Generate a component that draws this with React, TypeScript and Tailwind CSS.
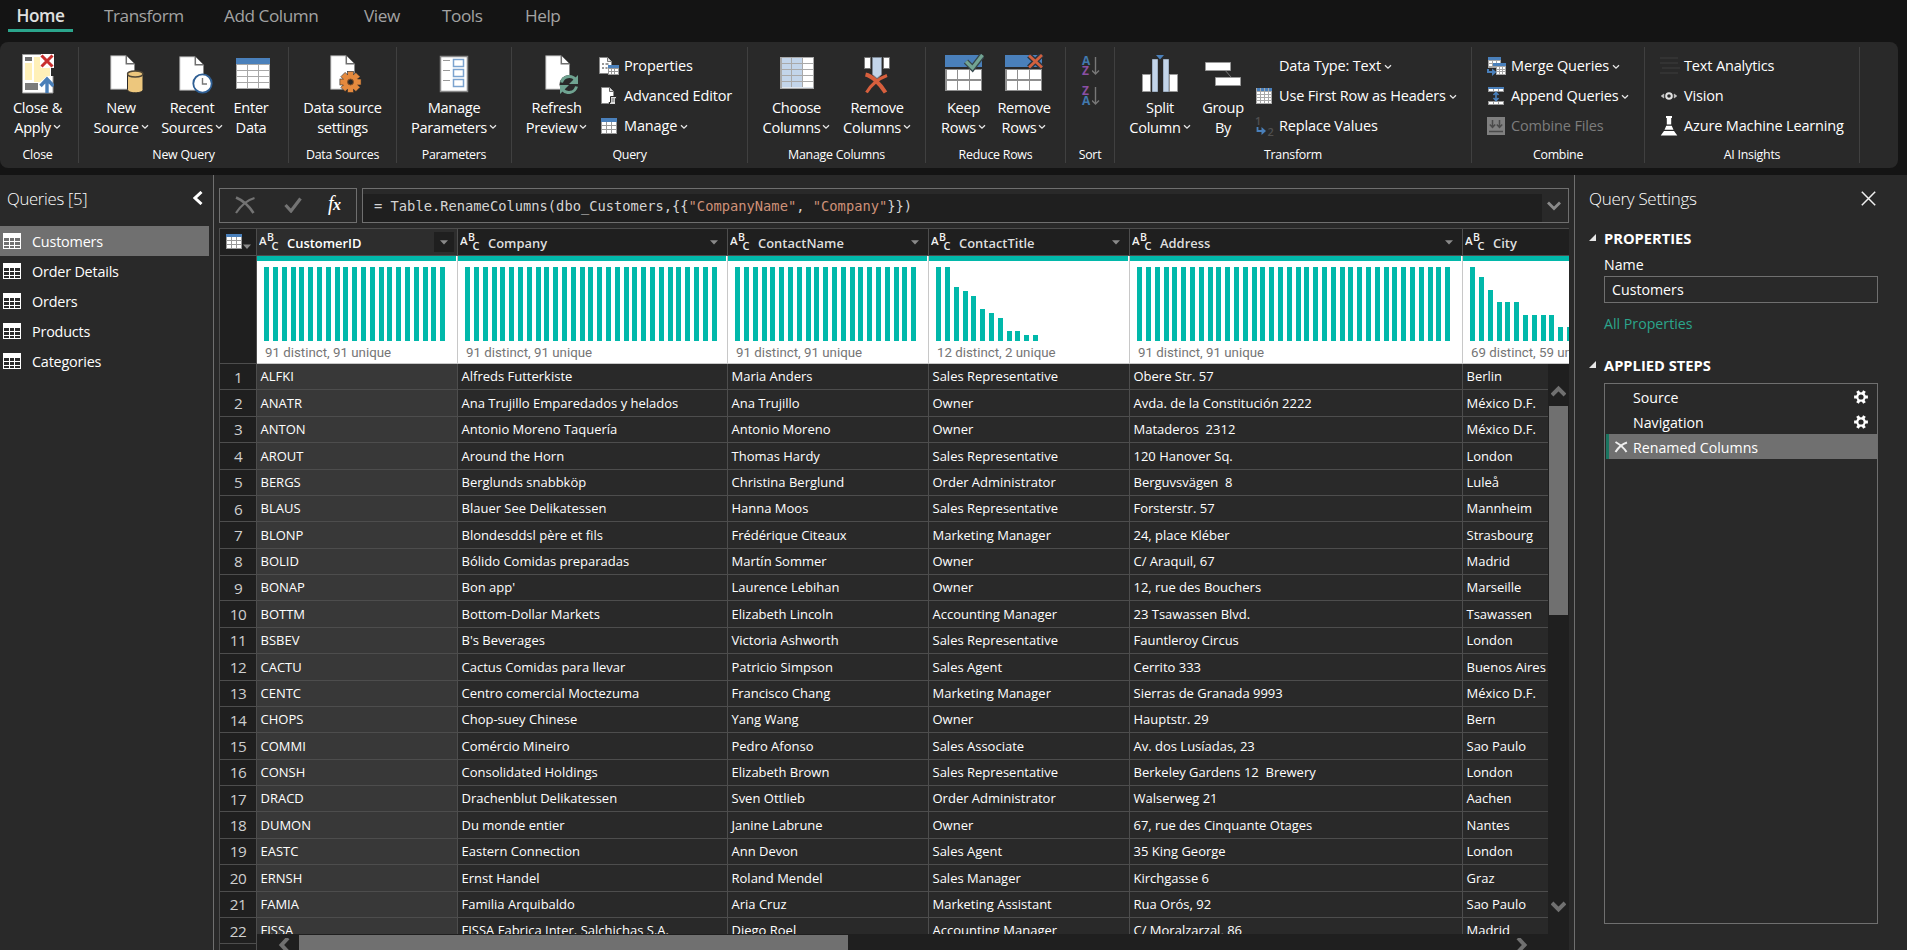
import React from "react";

/* ---------- ribbon icons ---------- */

const Chevron = ({ className = "" }: { className?: string }) => (
  <svg width="8" height="6" viewBox="0 0 8 6" className={`inline-block ${className}`}>
    <path d="M1 1.2 4 4.2 7 1.2" fill="none" stroke="#e8e8e8" strokeWidth="1.3" />
  </svg>
);

const Page = () => (
  <>
    <path d="M.7.7H16L24.5 9.2V34.3H.7z" fill="#fff" stroke="#8a8a8a" strokeWidth="1" />
    <path d="M16.3.8v8h8" fill="#fff" stroke="#6f6f6f" strokeWidth="1.5" />
  </>
);

const CloseApplyIcon = () => (
  <svg width="32" height="40" viewBox="0 0 32 40">
    <path d="M.5.5H31V39H.5z" fill="#fff" stroke="#9a9a9a" />
    <path d="M3 3h7v4H3z" fill="#6e6e6e" />
    <path d="M3 9h7v17H3zM12 3h6v9l10 2v8H25l-7 6h-6z" fill="#fff0b8" />
    <path d="M3 29h13v7H3z" fill="#7b7b7b" />
    <path d="M19 0h13v14H19z" fill="#fff" />
    <path d="M29 14h3v8h-3z" fill="#292929" />
    <path d="m19.500 1.500 11 11m0-11-11 11" stroke="#c92f2f" strokeWidth="3" />
    <path d="M25 39V26M18.500 32 25 25l6.500 7" stroke="#4a7fb8" strokeWidth="3.400" fill="none" />
  </svg>
);

const NewSourceIcon = () => (
  <svg width="34" height="40" viewBox="0 0 34 40" className="relative left-[6px]">
    <g transform="translate(0 1)">
      <Page />
    </g>
    <path d="M17.500 20v15.500c0 2 3.500 3.300 7.700 3.300s7.800-1.300 7.800-3.300V20z" fill="#edc77d" stroke="#292929" />
    <ellipse cx="25.200" cy="20" rx="7.700" ry="3" fill="#edc77d" stroke="#4f4636" strokeWidth="1.400" />
  </svg>
);

const RecentIcon = () => (
  <svg width="34" height="40" viewBox="0 0 34 40" className="relative left-[4px]">
    <g transform="translate(0 2)">
      <Page />
    </g>
    <circle cx="23.500" cy="29.500" r="9.200" fill="#fff" stroke="#2f5f94" strokeWidth="1.800" />
    <path d="M23.500 24v6H28" fill="none" stroke="#777" strokeWidth="1.400" />
  </svg>
);

const TableIcon = () => (
  <svg width="36" height="40" viewBox="0 0 36 40" shapeRendering="crispEdges" className="relative left-[2px]">
    <path d="M1 4h34v31H1z" fill="#a8a8a8" />
    <path d="M1 4h34v6H1z" fill="#4a80bb" />
    {[11, 17, 23, 29].map((y) => (
      <g key={y} fill="#fff">
        <path d={`M2 ${y}h10v5H2zM13 ${y}h10v5H13zM24 ${y}h10v5H24z`} />
      </g>
    ))}
  </svg>
);

const DataSourceIcon = () => (
  <svg width="34" height="40" viewBox="0 0 34 40" className="relative left-[4px]">
    <g transform="translate(0 1)">
      <Page />
    </g>
    <g transform="translate(20.500 28)">
      <g fill="#e58a3e" stroke="#292929" strokeWidth=".6">
        {[0, 45, 90, 135].map((a) => (
          <rect key={a} x="-3" y="-10.600" width="6" height="21.200" transform={`rotate(${a})`} />
        ))}
      </g>
      <circle r="7.600" fill="#e58a3e" />
      <circle r="3" fill="#292929" stroke="#8c5427" />
    </g>
  </svg>
);

const ManageParamsIcon = () => (
  <svg width="30" height="40" viewBox="0 0 30 40">
    <path d="M1.500 2.500h27v35h-27z" fill="#fff" stroke="#888" strokeWidth="1.500" />
    {[5.500, 15.500, 25.500].map((y) => (
      <g key={y} fill="none">
        <rect x="14.500" y={y} width="10" height="7" stroke="#7ba3cf" strokeWidth="1.500" />
        <path d={`M4 ${y + 1}h7`} stroke="#999" />
      </g>
    ))}
  </svg>
);

const RefreshIcon = () => (
  <svg width="34" height="40" viewBox="0 0 34 40" className="relative left-[5px]">
    <g transform="translate(0 1)">
      <Page />
    </g>
    <circle cx="24" cy="30.500" r="9.500" fill="#292929" />
    <path
      d="M16.500 28.500a8 8 0 0 1 14-3M31.500 32.500a8 8 0 0 1-14 3"
      fill="none"
      stroke="#6fa391"
      strokeWidth="3"
    />
    <path d="M33 21v9h-9zM15 40v-9h9z" fill="#6fa391" />
  </svg>
);

const ChooseColumnsIcon = () => (
  <svg width="36" height="40" viewBox="0 0 36 40" shapeRendering="crispEdges">
    <path d="M1 3h34v32H1z" fill="#a9a9a9" />
    {[4, 10, 16, 22, 28].map((y) => (
      <g key={y}>
        <path d={`M3 ${y}h9v5H3zM13 ${y}h10v5H13z`} fill="#c3d5ea" />
        <path d={`M24 ${y}h10v5H24z`} fill="#fff" />
      </g>
    ))}
    <path d="M3 33h31v1H3z" fill="#dfe6ee" />
  </svg>
);

const RemoveColumnsIcon = () => (
  <svg width="28" height="40" viewBox="0 0 28 40">
    <path d="M1.500 3.500h6v11h-6zM20.500 3.500h6v11h-6z" fill="#fff" stroke="#777" />
    <path d="M9.500 3.500h9v17l-4.500 4-4.500-4z" fill="#c3d5ea" stroke="#7c8794" />
    <path d="M2.500 20.500C9 22 17 29.500 22.500 38.500" fill="none" stroke="#d75f3d" strokeWidth="4" />
    <path d="M3.500 38.500C8 31 14.500 25 24 21.500" fill="none" stroke="#d75f3d" strokeWidth="3" />
  </svg>
);

const RowsBase = () => (
  <g shapeRendering="crispEdges">
    <path d="M1 1h37v12H1z" fill="#4a80bb" />
    <path d="M1 15h37v22H1z" fill="#8f8f8f" />
    <path d="M3 16h10v9H3zM14 16h11v9H14zM26 16h11v9H26zM3 27h10v9H3zM14 27h11v9H14zM26 27h11v9H26z" fill="#fff" />
  </g>
);

const KeepRowsIcon = () => (
  <svg width="40" height="40" viewBox="0 0 40 40">
    <RowsBase />
    <path d="m22 7.500 6.500 6.500L38.500 1" fill="none" stroke="#35454a" strokeWidth="6" />
    <path d="m22 7.500 6.500 6.500L38.500 1" fill="none" stroke="#72a392" strokeWidth="3.400" />
  </svg>
);

const RemoveRowsIcon = () => (
  <svg width="40" height="40" viewBox="0 0 40 40">
    <RowsBase />
    <path d="m25 1.500 13 12m0-13-13 13" stroke="#2b3540" strokeWidth="5.500" />
    <path d="m25 1.500 13 12m0-12.500-13 12.500" stroke="#d2603e" strokeWidth="2.800" />
  </svg>
);

const SplitIcon = () => (
  <svg width="38" height="40" viewBox="0 0 38 40">
    <path d="M15 1h8l-4 4.500z" fill="#4a80bb" />
    <path d="M1.500 20.500h8v17h-8zM28.500 20.500h8v17h-8z" fill="#fff" stroke="#999" />
    <path d="M11.500 5.500h5v32h-5zM22.500 5.500h5v32h-5z" fill="#c3d5ea" stroke="#9fb0c4" />
  </svg>
);

const GroupIcon = () => (
  <svg width="38" height="40" viewBox="0 0 38 40">
    <path d="m20 15 7 8" stroke="#777" />
    <path d="M1.500 8.500h25v8h-25zM11.500 23.500h25v8h-25z" fill="#fff" stroke="#999" />
  </svg>
);

const SortLetter = ({ letter }: { letter: string }) => (
  <span className={letter === "A" ? "text-[#4178ad]" : "text-[#8a4fa3]"}>{letter}</span>
);

const SortIcon = ({ top, bottom }: { top: string; bottom: string }) => (
  <div className="flex h-5 w-[18px]">
    <div className="flex w-[10px] flex-col text-[12px] font-bold leading-[10px]">
      <SortLetter letter={top} />
      <SortLetter letter={bottom} />
    </div>
    <svg width="8" height="20" viewBox="0 0 8 20">
      <path d="M3.500 1v17M0 14.500l3.500 3.500L7 14.500" fill="none" stroke="#777" strokeWidth="1.400" />
    </svg>
  </div>
);

/* ---------- small ribbon icons ---------- */

const MiniTable = () => (
  <svg width="18" height="18" viewBox="0 0 18 18" shapeRendering="crispEdges">
    <path d="M1 1h16v16H1z" fill="#9a9a9a" />
    <path d="M1 1h16v4H1z" fill="#4a80bb" />
    {[5, 9, 13].map((y) => (
      <path key={y} d={`M2 ${y}h4v3H2zM7 ${y}h4v3H7zM12 ${y}h4v3H12z`} fill="#fff" />
    ))}
  </svg>
);

const PropertiesIcon = () => (
  <svg width="20" height="20" viewBox="0 0 20 20" className="-ml-px">
    <path d="M.5 1.500h8l4 4v12H.5z" fill="#fff" stroke="#888" />
    <path d="M8.500 1.500v4h4" fill="#ddd" stroke="#777" />
    <path d="M3 8h2M6.500 8h3M3 12h2M6.500 12h2" stroke="#777" strokeWidth="1.500" />
    <path d="M9 10h11v9H9z" fill="#999" />
    <path d="M9 9h11v3H9z" fill="#4a80bb" />
    <path d="M10 13h2v2h-2zM13 13h2v2h-2zM16 13h3v2h-3zM10 16h2v2h-2zM13 16h2v2h-2zM16 16h3v2h-3z" fill="#fff" />
  </svg>
);

const AdvancedIcon = () => (
  <svg width="18" height="20" viewBox="0 0 18 20">
    <path d="M1.500 1.500h8l4 4v12h-12z" fill="#fff" stroke="#888" />
    <path d="M9.500 1.500v4h4" fill="#ddd" stroke="#666" />
    <path d="M10.500 10.500h6v2h-1v6h-5.500l-1-2h1.500z" fill="#ddd" stroke="#292929" />
    <path d="M11.500 13h3M11.500 15h3" stroke="#666" />
  </svg>
);

const HeaderTableIcon = () => (
  <svg width="18" height="18" viewBox="0 0 18 18" shapeRendering="crispEdges">
    <path d="M1 1h16v16H1z" fill="#a9a9a9" />
    <path d="M2 1h3v3H2zM6 1h3v3H6zM10 1h3v3h-3zM14 1h3v3h-3z" fill="#4a80bb" />
    {[5, 8, 11, 14].map((y) => (
      <path key={y} d={`M2 ${y}h3v2H2zM6 ${y}h3v2H6zM10 ${y}h3v2h-3zM14 ${y}h2v2h-2z`} fill="#fff" />
    ))}
  </svg>
);

const ReplaceIcon = () => (
  <svg width="20" height="20" viewBox="0 0 20 20" fontFamily="Open Sans" fontSize="11" fontWeight="600">
    <text x="0" y="9" fill="#505050">1</text>
    <text x="12.500" y="19.500" fill="#505050">2</text>
    <path d="M2.500 11v4H8" fill="none" stroke="#4a80bb" strokeWidth="1.800" />
    <path d="m6.500 11 4.500 4-4.500 4z" fill="#4a80bb" />
  </svg>
);

const MergeIcon = () => (
  <svg width="20" height="20" viewBox="0 0 20 20" shapeRendering="crispEdges">
    <path d="M1 1h13v11H1z" fill="#a5a5a5" />
    <path d="M1 1h13v3H1z" fill="#4a80bb" />
    <path d="M2 5h3v2H2zM6 5h3v2H6zM10 5h3v2h-3zM2 8h3v2H2z" fill="#fff" />
    <path d="M6 7h13v12H6z" fill="#a5a5a5" />
    <path d="M6 7h13v3H6z" fill="#4a80bb" />
    <path d="M10 11h2v2h-2zM13 11h2v2h-2zM16 11h2v2h-2zM10 14h2v1h-2zM13 14h2v1h-2zM16 14h2v1h-2zM10 16h2v2h-2zM13 16h2v2h-2zM16 16h2v2h-2z" fill="#fff" />
    <path d="M0 12h9v8H0z" fill="#292929" />
    <path d="M1 13v3h5" fill="none" stroke="#4a80bb" strokeWidth="2" shapeRendering="auto" />
    <path d="m5 12.500 4.500 3.500L5 20z" fill="#4a80bb" shapeRendering="auto" />
  </svg>
);

const AppendIcon = () => (
  <svg width="18" height="20" viewBox="0 0 18 20">
    <g shapeRendering="crispEdges">
      <path d="M1 1h16v2H1z" fill="#4a80bb" />
      <path d="M1 3h16v3H1zM1 15h16v4H1z" fill="#999" />
      <path d="M2 3h4v2H2zM7 3h4v2H7zM12 3h4v2H12zM2 16h4v2H2zM7 16h4v2H7zM12 16h4v2H12z" fill="#fff" />
    </g>
    <path d="M9 7v7M6.500 9 9 6.500 11.500 9M6.500 12 9 14.500 11.500 12" fill="none" stroke="#4a80bb" strokeWidth="1.600" />
  </svg>
);

const CombineIcon = () => (
  <svg width="18" height="20" viewBox="0 0 18 20">
    <path d="M0 1h18v18H0z" fill="#808080" />
    <path d="M5.500 4v7M2.800 8.500 5.500 11.500 8.200 8.500M12.500 4v7M9.800 8.500l2.700 3 2.700-3M2 15.500h14" fill="none" stroke="#4a4a4a" strokeWidth="1.500" />
  </svg>
);

const TextAnalyticsIcon = () => (
  <svg width="20" height="18" viewBox="0 0 20 18" shapeRendering="crispEdges">
    <path d="M0 0h18v2H0zM0 5h18v2H0zM2 10h18v2H2zM0 15h18v2H0z" fill="#333" />
  </svg>
);

const VisionIcon = () => (
  <svg width="18" height="12" viewBox="0 0 18 12">
    <circle cx="9" cy="6" r="2.800" fill="none" stroke="#e2e2e2" strokeWidth="2" />
    <path d="M3.800 4 1.200 6l2.600 2zM14.200 4l2.600 2-2.600 2z" fill="#d0d0d0" stroke="#d0d0d0" strokeWidth=".6" />
  </svg>
);

const FlaskIcon = () => (
  <svg width="18" height="20" viewBox="0 0 18 20">
    <path d="M6 0h6v2h-.8v6.500h-4.400V2H6zM6.300 9.800h5.400l1.800 4H4.500zM4 15h10l3.300 4.500H.7z" fill="#fff" />
  </svg>
);

/* ---------- ribbon building blocks ---------- */

const Group = ({ label, className, children }: { label: string; className: string; children: React.ReactNode }) => (
  <div className={`flex shrink-0 flex-col border-r border-[#404040] ${className}`}>
    <div className="flex h-[100px] w-full">{children}</div>
    <div className="text-center text-[12.4px] leading-4 tracking-[-0.25px]">{label}</div>
  </div>
);

const Big = ({
  icon,
  a,
  b,
  menu,
  className,
}: {
  icon: React.ReactNode;
  a: string;
  b: string;
  menu?: boolean;
  className: string;
}) => (
  <button className={`flex shrink-0 flex-col items-center pt-[7px] text-[14.6px] leading-5 tracking-[-0.3px] ${className}`}>
    <span className="mb-[3px] block h-10">{icon}</span>
    <span className="whitespace-nowrap">{a}</span>
    <span className="flex items-center whitespace-nowrap">
      {b}
      {menu && <Chevron className="ml-[2px]" />}
    </span>
  </button>
);

const Small = ({ icon, text, menu, muted }: { icon: React.ReactNode; text: string; menu?: boolean; muted?: boolean }) => (
  <div className="flex h-[30px] items-center">
    <span className="flex w-6 shrink-0">{icon}</span>
    <span className={`whitespace-nowrap text-[14.5px] tracking-[-0.15px] ${muted ? "text-[#7d7d7d]" : ""}`}>{text}</span>
    {menu && <Chevron className="ml-[3px] mt-0.5" />}
  </div>
);

const Ribbon = () => (
  <div className="mr-[9px] flex h-[126px] rounded-lg bg-[#292929] py-[5px] text-white">
    <Group label="Close" className="w-[79px] pr-[3px]">
      <Big icon={<CloseApplyIcon />} a="Close &" b="Apply" menu className="w-[75px]" />
    </Group>
    <Group label="New Query" className="w-[210px]">
      <Big icon={<NewSourceIcon />} a="New" b="Source" menu className="w-[84px]" />
      <Big icon={<RecentIcon />} a="Recent" b="Sources" menu className="w-[58px]" />
      <Big icon={<TableIcon />} a="Enter" b="Data" className="w-[60px]" />
    </Group>
    <Group label="Data Sources" className="w-[108px]">
      <Big icon={<DataSourceIcon />} a="Data source" b="settings" className="w-[107px]" />
    </Group>
    <Group label="Parameters" className="w-[115px]">
      <Big icon={<ManageParamsIcon />} a="Manage" b="Parameters" menu className="w-[114px]" />
    </Group>
    <Group label="Query" className="w-[236px]">
      <Big icon={<RefreshIcon />} a="Refresh" b="Preview" menu className="w-[89px]" />
      <div className="-ml-px pt-1">
        <Small icon={<PropertiesIcon />} text="Properties" />
        <Small icon={<AdvancedIcon />} text="Advanced Editor" />
        <Small icon={<MiniTable />} text="Manage" menu />
      </div>
    </Group>
    <Group label="Manage Columns" className="w-[178px]">
      <Big icon={<ChooseColumnsIcon />} a="Choose" b="Columns" menu className="ml-2 w-[81px]" />
      <Big icon={<RemoveColumnsIcon />} a="Remove" b="Columns" menu className="w-20" />
    </Group>
    <Group label="Reduce Rows" className="w-[140px]">
      <Big icon={<KeepRowsIcon />} a="Keep" b="Rows" menu className="ml-[7px] w-[61px]" />
      <Big icon={<RemoveRowsIcon />} a="Remove" b="Rows" menu className="w-[60px]" />
    </Group>
    <Group label="Sort" className="w-[49px]">
      <div className="flex flex-col gap-[10px] pl-4 pt-[9px]">
        <SortIcon top="A" bottom="Z" />
        <SortIcon top="Z" bottom="A" />
      </div>
    </Group>
    <Group label="Transform" className="w-[357px]">
      <Big icon={<SplitIcon />} a="Split" b="Column" menu className="ml-[5px] w-20" />
      <Big icon={<GroupIcon />} a="Group" b="By" className="w-[46px]" />
      <div className="ml-[9px] pt-1">
        <Small icon={null} text="Data Type: Text" menu />
        <Small icon={<HeaderTableIcon />} text="Use First Row as Headers" menu />
        <Small icon={<ReplaceIcon />} text="Replace Values" />
      </div>
    </Group>
    <Group label="Combine" className="w-[173px]">
      <div className="pl-[15px] pt-1">
        <Small icon={<MergeIcon />} text="Merge Queries" menu />
        <Small icon={<AppendIcon />} text="Append Queries" menu />
        <Small icon={<CombineIcon />} text="Combine Files" muted />
      </div>
    </Group>
    <Group label="AI Insights" className="w-[215px]">
      <div className="pl-[15px] pt-1">
        <Small icon={<TextAnalyticsIcon />} text="Text Analytics" />
        <Small icon={<VisionIcon />} text="Vision" />
        <Small icon={<FlaskIcon />} text="Azure Machine Learning" />
      </div>
    </Group>
  </div>
);

const Tabs = () => (
  <nav className="flex h-[42px] pl-2 pt-[3px] text-[17.2px] leading-[25px] tracking-[-0.45px] text-[#a3a3a3]">
    <div className="h-[29px] w-[65px] border-b-[3px] border-[#2ba58c] text-center font-semibold text-[#e0e0e0]">Home</div>
    <div className="ml-[31px] w-[120px]">Transform</div>
    <div className="w-[140px]">Add Column</div>
    <div className="w-[78px]">View</div>
    <div className="w-[83px]">Tools</div>
    <div>Help</div>
  </nav>
);

/* ---------- queries pane ---------- */

const QueryIcon = ({ selected }: { selected: boolean }) => (
  <svg width="18" height="16" viewBox="0 0 18 16" shapeRendering="crispEdges">
    <path d="M0 0h18v16H0z" fill="#fff" />
    {[5, 9, 13].map((y) => (
      <path
        key={y}
        d={`M1 ${y}h5v${y === 13 ? 2 : 3}H1zM7 ${y}h4v${y === 13 ? 2 : 3}H7zM12 ${y}h5v${y === 13 ? 2 : 3}H12z`}
        fill={selected ? "#707070" : "#292929"}
      />
    ))}
  </svg>
);

const Queries = () => (
  <aside className="w-[214px] shrink-0 border-r border-[#6f6f6f] text-white">
    <div className="flex h-[51px] justify-between pl-[7px] pr-[10px] pt-[12px]">
      <h2 className="text-[16.7px] font-light leading-6 tracking-[-0.3px]">Queries [5]</h2>
      <svg width="10" height="14" viewBox="0 0 10 14" className="mt-1">
        <path d="M8.500 1 2 7l6.500 6" fill="none" stroke="#fff" strokeWidth="3" />
      </svg>
    </div>
    {["Customers", "Order Details", "Orders", "Products", "Categories"].map((q, i) => (
      <div
        key={q}
        className={`flex h-[30px] w-[209px] items-center pl-[3px] text-[14.4px] tracking-[-0.2px] ${i === 0 ? "bg-[#707070]" : ""}`}
      >
        <QueryIcon selected={i === 0} />
        <span className="ml-[11px] mt-0.5">{q}</span>
      </div>
    ))}
  </aside>
);

/* ---------- data grid ---------- */

const flat = (n: number) => Array.from({ length: n }, () => 74);

type Column = { name: string; width: string; bars: number[]; note: string; menu: boolean };

const columns: Column[] = [
  { name: "CustomerID", width: "w-[201px]", bars: flat(21), note: "91 distinct, 91 unique", menu: true },
  { name: "Company", width: "w-[270px]", bars: flat(29), note: "91 distinct, 91 unique", menu: true },
  { name: "ContactName", width: "w-[201px]", bars: flat(21), note: "91 distinct, 91 unique", menu: true },
  { name: "ContactTitle", width: "w-[201px]", bars: [74, 74, 54, 50, 45, 32, 28, 23, 10, 10, 6, 6], note: "12 distinct, 2 unique", menu: true },
  { name: "Address", width: "w-[333px]", bars: flat(36), note: "91 distinct, 91 unique", menu: true },
  { name: "City", width: "w-[201px]", bars: [74, 64, 51, 39, 39, 39, 26, 26, 26, 26, 14, 14], note: "69 distinct, 59 unique", menu: false },
];

const rows: string[][] = [
  ["ALFKI", "Alfreds Futterkiste", "Maria Anders", "Sales Representative", "Obere Str. 57", "Berlin"],
  ["ANATR", "Ana Trujillo Emparedados y helados", "Ana Trujillo", "Owner", "Avda. de la Constitución 2222", "México D.F."],
  ["ANTON", "Antonio Moreno Taquería", "Antonio Moreno", "Owner", "Mataderos  2312", "México D.F."],
  ["AROUT", "Around the Horn", "Thomas Hardy", "Sales Representative", "120 Hanover Sq.", "London"],
  ["BERGS", "Berglunds snabbköp", "Christina Berglund", "Order Administrator", "Berguvsvägen  8", "Luleå"],
  ["BLAUS", "Blauer See Delikatessen", "Hanna Moos", "Sales Representative", "Forsterstr. 57", "Mannheim"],
  ["BLONP", "Blondesddsl père et fils", "Frédérique Citeaux", "Marketing Manager", "24, place Kléber", "Strasbourg"],
  ["BOLID", "Bólido Comidas preparadas", "Martín Sommer", "Owner", "C/ Araquil, 67", "Madrid"],
  ["BONAP", "Bon app'", "Laurence Lebihan", "Owner", "12, rue des Bouchers", "Marseille"],
  ["BOTTM", "Bottom-Dollar Markets", "Elizabeth Lincoln", "Accounting Manager", "23 Tsawassen Blvd.", "Tsawassen"],
  ["BSBEV", "B's Beverages", "Victoria Ashworth", "Sales Representative", "Fauntleroy Circus", "London"],
  ["CACTU", "Cactus Comidas para llevar", "Patricio Simpson", "Sales Agent", "Cerrito 333", "Buenos Aires"],
  ["CENTC", "Centro comercial Moctezuma", "Francisco Chang", "Marketing Manager", "Sierras de Granada 9993", "México D.F."],
  ["CHOPS", "Chop-suey Chinese", "Yang Wang", "Owner", "Hauptstr. 29", "Bern"],
  ["COMMI", "Comércio Mineiro", "Pedro Afonso", "Sales Associate", "Av. dos Lusíadas, 23", "Sao Paulo"],
  ["CONSH", "Consolidated Holdings", "Elizabeth Brown", "Sales Representative", "Berkeley Gardens 12  Brewery", "London"],
  ["DRACD", "Drachenblut Delikatessen", "Sven Ottlieb", "Order Administrator", "Walserweg 21", "Aachen"],
  ["DUMON", "Du monde entier", "Janine Labrune", "Owner", "67, rue des Cinquante Otages", "Nantes"],
  ["EASTC", "Eastern Connection", "Ann Devon", "Sales Agent", "35 King George", "London"],
  ["ERNSH", "Ernst Handel", "Roland Mendel", "Sales Manager", "Kirchgasse 6", "Graz"],
  ["FAMIA", "Familia Arquibaldo", "Aria Cruz", "Marketing Assistant", "Rua Orós, 92", "Sao Paulo"],
  ["FISSA", "FISSA Fabrica Inter. Salchichas S.A.", "Diego Roel", "Accounting Manager", "C/ Moralzarzal, 86", "Madrid"],
];

const TypeIcon = () => (
  <svg width="22" height="22" viewBox="0 0 22 22" fontFamily="Open Sans" fontWeight="600" fill="#f2f2f2" className="shrink-0">
    <text x="0" y="13.500" fontSize="11.500">A</text>
    <text x="8" y="10" fontSize="10.500">B</text>
    <text x="12.500" y="18.500" fontSize="11">C</text>
  </svg>
);

const Caret = () => (
  <svg width="8" height="5" viewBox="0 0 8 5">
    <path d="M0 .3h8L4 4.600z" fill="#8a8a8a" />
  </svg>
);

const HeaderCell = ({ col, selected }: { col: Column; selected: boolean }) => (
  <div
    className={`flex h-[27px] shrink-0 items-center border-b border-r border-[#4d4d4d] pl-[2px] ${col.width} ${
      selected ? "bg-[#2d2d2d] text-white" : "bg-[#1f1f1f] text-[#dedede]"
    }`}
  >
    <TypeIcon />
    <span className="ml-[6px] mt-0.5 flex-1 text-[12.950px] font-semibold leading-[18px]">{col.name}</span>
    {col.menu && (
      <span className={`mr-[3px] flex h-5 w-5 items-center justify-center ${selected ? "bg-[#1f1f1f]" : ""}`}>
        <Caret />
      </span>
    )}
  </div>
);

const Profile = ({ col }: { col: Column }) => (
  <div className={`h-[108px] shrink-0 overflow-hidden border-b border-r border-[#c8c8c8] bg-white ${col.width}`}>
    <div className="mr-px h-[5px] bg-[#01b8aa]" />
    <svg width="320" height="74" className="ml-[7px] mt-[6px]" shapeRendering="crispEdges">
      {col.bars.map((h, i) => (
        <rect key={i} x={Math.round(i * 8.8 + 0.2)} y={74 - h} width="5" height={h} fill="#01b8aa" />
      ))}
    </svg>
    <div className="ml-2 mt-[4px] whitespace-nowrap font-[Roboto] text-[13.3px] leading-4 text-[#757575]">{col.note}</div>
  </div>
);

const Grid = () => (
  <div className="flex h-[722px] border-l border-t border-[#4d4d4d]">
    <div className="w-[37px] shrink-0 border-r border-[#4d4d4d] bg-[#1f1f1f]">
      <div className="flex h-[27px] items-center border-b border-[#4d4d4d] pl-[6px]">
        <svg width="26" height="18" viewBox="0 0 26 18">
          <g shapeRendering="crispEdges">
            <path d="M0 1h16v15H0z" fill="#999" />
            <path d="M0 1h16v3H0z" fill="#4a80bb" />
            <path d="M1 4h4v3H1zM6 4h4v3H6zM11 4h4v3h-4zM1 8h4v3H1zM6 8h4v3H6zM11 8h4v3h-4zM1 12h4v3H1zM6 12h4v3H6zM11 12h4v3h-4z" fill="#fff" />
          </g>
          <path d="M17 11.500h8L21 16z" fill="#8a8a8a" />
        </svg>
      </div>
      <div className="h-[108px] border-b border-[#4d4d4d]" />
      {rows.map((r, i) => (
        <div
          key={r[0]}
          className="flex h-[26.375px] items-center justify-center border-b border-[#4d4d4d] text-[15.3px] leading-5 tracking-[-0.5px] text-[#cfcfcf]"
        >
          {i + 1}
        </div>
      ))}
    </div>
    <div className="flex min-w-0 flex-1 flex-col overflow-hidden">
      <div className="flex">
        {columns.map((c, i) => (
          <HeaderCell key={c.name} col={c} selected={i === 0} />
        ))}
      </div>
      <div className="flex">
        {columns.map((c) => (
          <Profile key={c.name} col={c} />
        ))}
      </div>
      <div className="flex h-[570px] shrink-0">
        <div className="min-w-0 flex-1 overflow-hidden">
          {rows.map((r) => (
            <div key={r[0]} className="flex h-[26.375px]">
              {r.map((cell, i) => (
                <div
                  key={i}
                  className={`flex shrink-0 items-center whitespace-pre border-b border-r border-[#4d4d4d] pb-[0.6px] pl-[3.500px] text-[13px] font-medium leading-[18px] text-white ${columns[i].width} ${
                    i === 0 ? "bg-[#383838]" : ""
                  }`}
                >
                  {cell}
                </div>
              ))}
            </div>
          ))}
        </div>
        <div className="flex w-[21px] shrink-0 flex-col items-center bg-[#1f1f1f]">
          <svg width="15" height="12" viewBox="0 0 15 12" className="mt-[21px]">
            <path d="m1 10 6.500-6.500L14 10" fill="none" stroke="#707070" strokeWidth="4" />
          </svg>
          <div className="mt-[9px] h-[209px] w-[19px] bg-[#707070]" />
          <svg width="15" height="12" viewBox="0 0 15 12" className="mt-auto mb-[21px]">
            <path d="m1 2 6.500 6.500L14 2" fill="none" stroke="#707070" strokeWidth="4" />
          </svg>
        </div>
      </div>
      <div className="flex h-4 shrink-0 bg-[#1f1f1f] pt-px">
        <svg width="12" height="15" viewBox="0 0 12 15" className="ml-[21px] mt-[3px]">
          <path d="M10 0 3.500 7l6.500 7" fill="none" stroke="#707070" strokeWidth="4" />
        </svg>
        <div className="ml-[9px] h-[15px] w-[549px] bg-[#707070]" />
        <svg width="12" height="15" viewBox="0 0 12 15" className="ml-auto mr-[41px] mt-[3px]">
          <path d="m2 0 6.500 7L2 14" fill="none" stroke="#707070" strokeWidth="4" />
        </svg>
      </div>
    </div>
  </div>
);

const FormulaBar = () => (
  <div className="mb-[5px] flex h-[35px] gap-[5px]">
    <div className="flex w-[138px] items-center border border-[#6f6f6f]">
      <svg width="20" height="18" viewBox="0 0 20 18" className="ml-[15px] -mt-px">
        <path d="M1 1.500C7 4 14 10 18.500 17" fill="none" stroke="#737373" strokeWidth="2.600" />
        <path d="M1 17C6 9.500 12 4 19.500 2" fill="none" stroke="#737373" strokeWidth="2.200" />
      </svg>
      <svg width="18" height="16" viewBox="0 0 18 16" className="ml-[29px] -mt-px">
        <path d="m1.500 8 5.500 6L16.500 1.500" fill="none" stroke="#737373" strokeWidth="3.200" />
      </svg>
      <span className="ml-[26px] -mt-1 font-['Liberation_Serif'] text-[20px] font-bold italic leading-6 tracking-[-0.5px] text-white">
        <span className="font-normal">f</span>
        <span className="text-[16px]">x</span>
      </span>
    </div>
    <div className="flex w-[1207px] border border-[#6f6f6f] pt-[5px]">
      <div className="flex-1 whitespace-pre bg-[#1f1f1f] pl-[11px] font-['DejaVu_Sans_Mono'] text-[13.75px] leading-[24px] text-[#d4d4d4]">
        = Table.RenameColumns(dbo_Customers,{"{{"}
        <span className="text-[#ce9178]">"CompanyName"</span>, <span className="text-[#ce9178]">"Company"</span>
        {"}})"}
      </div>
      <div className="flex w-[26px] items-center justify-center">
        <svg width="14" height="10" viewBox="0 0 14 10" className="mr-[3px] -mt-1">
          <path d="m1 1.500 6 6 6-6" fill="none" stroke="#8a8a8a" strokeWidth="2.800" />
        </svg>
      </div>
    </div>
  </div>
);

/* ---------- settings pane ---------- */

const Gear = () => (
  <svg width="14" height="14" viewBox="-7 -7 14 14" className="mr-[9px]">
    {[30, 90, 150].map((a) => (
      <rect key={a} x="-1.500" y="-6.900" width="3" height="13.800" fill="#fff" transform={`rotate(${a})`} />
    ))}
    <circle r="3.700" fill="#292929" stroke="#fff" strokeWidth="2.200" />
  </svg>
);

const Triangle = () => (
  <svg width="7" height="7" viewBox="0 0 7 7" className="mr-[8px] -mt-0.5">
    <path d="M7 0v7H0z" fill="#e6e6e6" />
  </svg>
);

const Settings = () => (
  <aside className="flex-1 border-l border-[#6f6f6f] pl-[14px] text-white">
    <div className="flex justify-between pr-[31px] pt-[12px]">
      <h2 className="text-[17px] font-light leading-6 tracking-[-0.3px]">Query Settings</h2>
      <svg width="15" height="15" viewBox="0 0 15 15" className="mt-1">
        <path d="m.8.8 13.400 13.400m0-13.400L.8 14.200" stroke="#f0f0f0" strokeWidth="1.500" />
      </svg>
    </div>
    <div className="mt-[17px] flex h-5 items-center text-[14.7px] font-bold">
      <Triangle />
      PROPERTIES
    </div>
    <div className="ml-[15px] w-[274px] text-[14.2px]">
      <div className="mt-[7px] leading-5">Name</div>
      <div className="mt-px flex h-[27px] items-center border border-[#6f6f6f] pl-[7px] pt-px">Customers</div>
      <div className="mt-[11px] leading-5 text-[#2ba58c]">All Properties</div>
    </div>
    <div className="mt-[21px] flex h-5 items-center text-[14.7px] font-bold">
      <Triangle />
      APPLIED STEPS
    </div>
    <div className="ml-[15px] mt-2 h-[541px] w-[274px] border border-[#6f6f6f] text-[14.2px]">
      <div className="flex h-[25px] items-center justify-between pl-7">
        <span className="mt-0.5">Source</span>
        <Gear />
      </div>
      <div className="flex h-[25px] items-center justify-between pl-7">
        <span className="mt-0.5">Navigation</span>
        <Gear />
      </div>
      <div className="ml-px flex h-[25px] items-center border-l-[3px] border-[#1b7460] bg-[#707070] pl-[5px]">
        <svg width="14" height="12" viewBox="0 0 14 12" className="mr-[5px]">
          <path d="M1.500 1C5 3 10 7 12.500 11M1.500 11C4 7 8 3 13 1.500" fill="none" stroke="#eee" strokeWidth="2" />
        </svg>
        <span className="mt-0.5">Renamed Columns</span>
      </div>
    </div>
  </aside>
);

export default function App() {
  return (
    <div className="flex h-[950px] w-[1907px] flex-col overflow-hidden bg-[#141414] font-['Open_Sans','Noto_Sans',sans-serif]">
      <Tabs />
      <Ribbon />
      <div className="mt-[7px] flex min-h-0 flex-1 bg-[#292929]">
        <Queries />
        <main className="w-[1360px] shrink-0 pl-[5px] pr-[5px] pt-[13px]">
          <FormulaBar />
          <Grid />
        </main>
        <Settings />
      </div>
    </div>
  );
}
